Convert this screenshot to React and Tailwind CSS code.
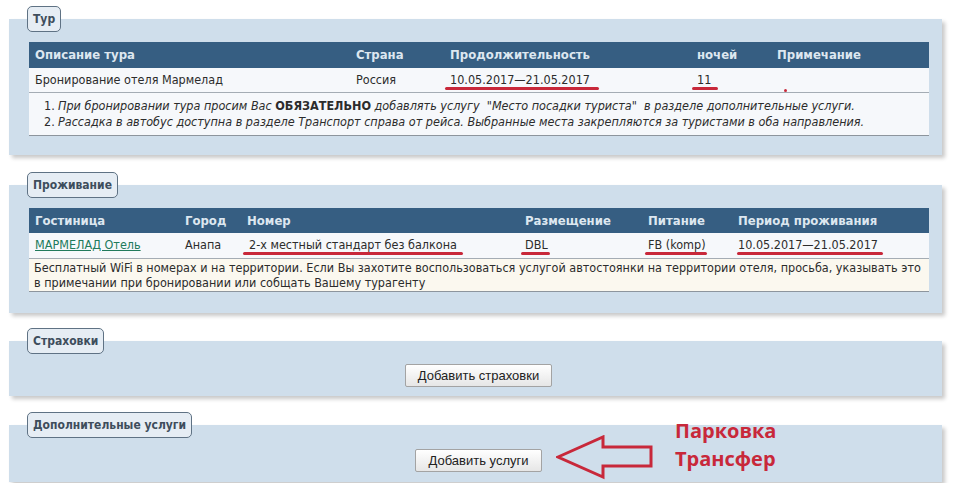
import React from 'react'

const font = { fontFamily: '"DejaVu Sans", Verdana, sans-serif', fontStretch: 'condensed' }

function Tab({ children }) {
  return (
    <div className="relative z-10 -mb-[13px] ml-[18px] inline-flex h-[26px] items-center rounded-[5px] border border-[#5f7284] bg-[#e6edf4] px-[5px] text-[12px] font-bold text-[#3e4d5c]">
      {children}
    </div>
  )
}

function Panel({ tab, className, children }) {
  return (
    <div className="flex flex-col items-start">
      <Tab>{tab}</Tab>
      <div className={'w-[933px] self-start bg-[#cfdeeb] shadow-[3px_3px_4px_rgba(0,0,0,0.22)] ' + className}>
        {children}
      </div>
    </div>
  )
}

function Mark({ children, l = 5, r = 5, t = 16 }) {
  return (
    <span className="relative inline-block">
      {children}
      <span
        className="absolute h-[3px] rounded-full bg-[#c8283a]"
        style={{ left: -l, right: -r, top: t }}
      />
    </span>
  )
}

function Btn({ children }) {
  return (
    <button
      className="ml-[6px] h-[23px] rounded-[2px] border border-[#a3a3a3] bg-gradient-to-b from-[#ffffff] to-[#e6e6e6] px-[12px] text-[13px] text-[#222]"
      style={{ fontFamily: '"Liberation Sans", Arial, sans-serif', fontStretch: 'normal' }}
    >
      {children}
    </button>
  )
}

export default function App() {
  return (
    <div className="min-h-[483px] w-[953px] bg-white pl-[9px] pt-[6px] text-[#2c2c2c]" style={font}>
      <Panel tab="Тур" className="pb-[19px] pl-[20px] pr-[13px] pt-[23px]">
        <div className="w-[900px] text-[12.5px]">
          <div className="flex h-[26px] items-center bg-[#365e82] text-[13px] font-bold text-[#dde7f0]">
            <div className="w-[321px] pl-[6px]">Описание тура</div>
            <div className="w-[94px] pl-[6px]">Страна</div>
            <div className="w-[247px] pl-[6px]">Продолжительность</div>
            <div className="w-[80px] pl-[6px]">ночей</div>
            <div className="flex-1 pl-[6px]">Примечание</div>
          </div>
          <div className="flex h-[25px] items-center border-b border-[#a4acb4] bg-[#f6f8fb]">
            <div className="w-[321px] pl-[6px]">Бронирование отеля Мармелад</div>
            <div className="w-[94px] pl-[6px]">Россия</div>
            <div className="w-[247px] pl-[6px]">
              <Mark l={5} r={9}>10.05.2017—21.05.2017</Mark>
            </div>
            <div className="w-[80px] pl-[6px]">
              <Mark l={5} r={7}>11</Mark>
            </div>
            <div className="relative flex-1 pl-[6px]">
              <span className="absolute left-[13px] top-[9px] h-[3px] w-[3px] rounded-full bg-[#c8283a]" />
            </div>
          </div>
          <div className="flex h-[43px] flex-col justify-center border-b border-[#8d959d] bg-[#f6f8fb] pl-[15px] leading-[16px]">
            <div className="flex">
              <span className="w-[14px]">1.</span>
              <span className="italic">
                При бронировании тура просим Вас <b className="not-italic">ОБЯЗАТЕЛЬНО</b> добавлять услугу &nbsp;"Место посадки туриста" &nbsp;в разделе дополнительные услуги.
              </span>
            </div>
            <div className="flex">
              <span className="w-[14px]">2.</span>
              <span className="italic">
                Рассадка в автобус доступна в разделе Транспорт справа от рейса. Выбранные места закрепляются за туристами в оба направления.
              </span>
            </div>
          </div>
        </div>
      </Panel>

      <div className="h-[17px]" />

      <Panel tab="Проживание" className="pb-[21px] pl-[20px] pr-[13px] pt-[23px]">
        <div className="w-[900px] text-[12.5px]">
          <div className="flex h-[25px] items-center bg-[#365e82] text-[13px] font-bold text-[#dde7f0]">
            <div className="w-[150px] pl-[6px]">Гостиница</div>
            <div className="w-[62px] pl-[6px]">Город</div>
            <div className="w-[278px] pl-[6px]">Номер</div>
            <div className="w-[123px] pl-[6px]">Размещение</div>
            <div className="w-[90px] pl-[6px]">Питание</div>
            <div className="flex-1 pl-[6px]">Период проживания</div>
          </div>
          <div className="flex h-[26px] items-center border-b border-[#a4acb4] bg-[#f6f8fb]">
            <div className="w-[150px] pl-[6px]">
              <a href="#" className="text-[#217a5c] underline">МАРМЕЛАД Отель</a>
            </div>
            <div className="w-[62px] pl-[6px]">Анапа</div>
            <div className="w-[278px] pl-[8px]">
              <Mark l={6} r={6}>2-х местный стандарт без балкона</Mark>
            </div>
            <div className="w-[123px] pl-[6px]">
              <Mark l={4} r={2}>DBL</Mark>
            </div>
            <div className="w-[90px] pl-[6px]">
              <Mark l={3} r={1}>FB (komp)</Mark>
            </div>
            <div className="flex-1 pl-[6px]">
              <Mark l={1} r={5}>10.05.2017—21.05.2017</Mark>
            </div>
          </div>
          <div className="flex h-[33px] flex-col justify-center border-b border-[#8d959d] bg-[#fbf8ef] pl-[5px] leading-[15px]">
            <div className="whitespace-nowrap">Бесплатный WiFi в номерах и на территории. Если Вы захотите воспользоваться услугой автостоянки на территории отеля, просьба, указывать это</div>
            <div>в примечании при бронировании или собщать Вашему турагенту</div>
          </div>
        </div>
      </Panel>

      <div className="h-[15px]" />

      <Panel tab="Страховки" className="flex justify-center pb-[9px] pt-[23px]">
        <Btn>Добавить страховки</Btn>
      </Panel>

      <div className="h-[16px]" />

      <Panel tab="Дополнительные услуги" className="relative flex h-[57px] justify-center pt-[24px]">
        <Btn>Добавить услуги</Btn>
        <svg className="absolute left-[547px] top-[10px]" width="100" height="45" viewBox="0 0 100 45">
          <path
            d="M2 22 L47 2 L47 12 L95 12 L95 31 L47 31 L47 42 Z"
            fill="none"
            stroke="#c8283a"
            strokeWidth="3"
            strokeLinejoin="miter"
          />
        </svg>
        <div
          className="absolute left-[666px] top-[-8px] text-[20px] font-bold leading-[28px] text-[#c8283a]"
          style={{ fontFamily: '"Open Sans", sans-serif', fontStretch: 'normal' }}
        >
          <div>Парковка</div>
          <div>Трансфер</div>
        </div>
      </Panel>
    </div>
  )
}
